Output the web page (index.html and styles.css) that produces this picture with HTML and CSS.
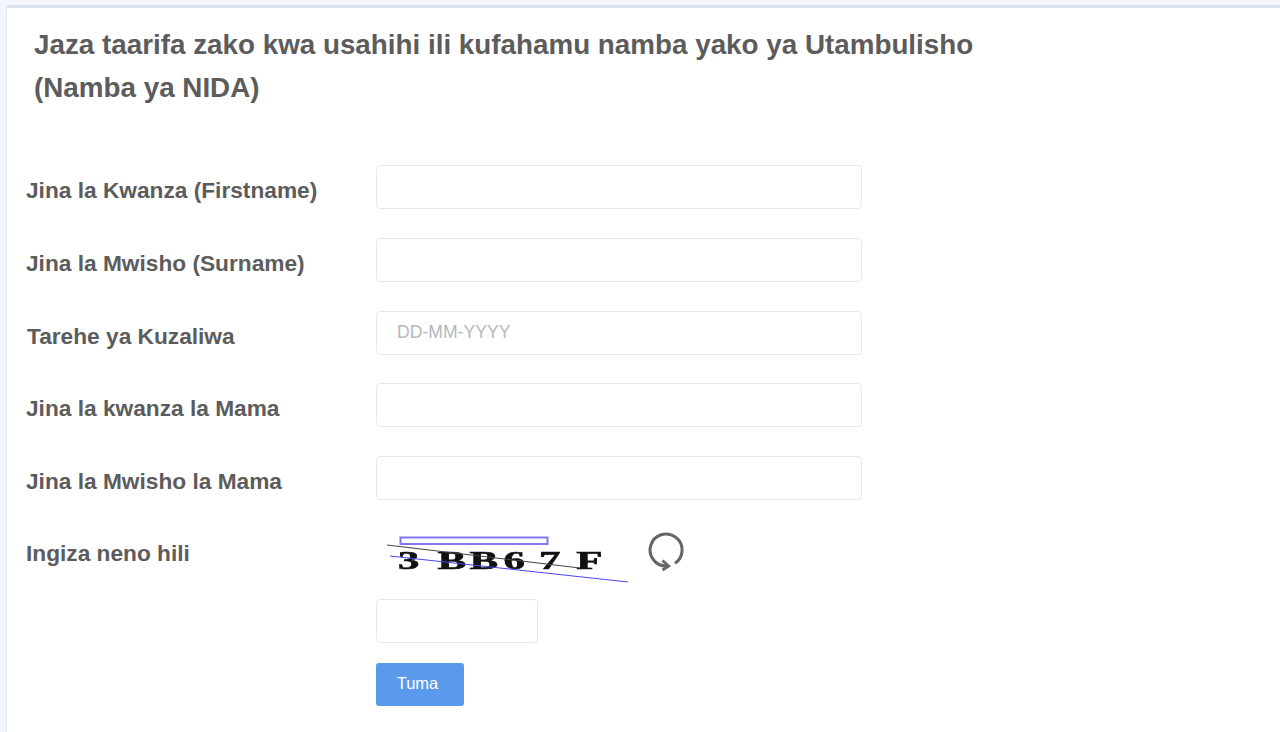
FILE: index.html
```html
<!DOCTYPE html>
<html>
<head>
    <title>Namba ya NIDA</title>
    <link rel="stylesheet" href="styles.css">
</head>
<body>
    <div class="card">
        <h1 class="title">Jaza taarifa zako kwa usahihi ili kufahamu namba yako ya Utambulisho<br>(Namba ya NIDA)</h1>

        <form class="lookup-form">
            <div class="form-row">
                <label for="firstname">Jina la Kwanza (Firstname)</label>
                <input type="text" id="firstname" />
            </div>
            <div class="form-row">
                <label for="surname">Jina la Mwisho (Surname)</label>
                <input type="text" id="surname" />
            </div>
            <div class="form-row">
                <label for="dob" class="label-dob">Tarehe ya Kuzaliwa</label>
                <input type="text" id="dob" placeholder="DD-MM-YYYY" />
            </div>
            <div class="form-row">
                <label for="mfirst">Jina la kwanza la Mama</label>
                <input type="text" id="mfirst" />
            </div>
            <div class="form-row">
                <label for="mlast">Jina la Mwisho la Mama</label>
                <input type="text" id="mlast" />
            </div>

            <div class="form-row captcha-row">
                <label for="captcha">Ingiza neno hili</label>
                <div class="captcha-box">
                    <div class="captcha-top">
                        <svg class="captcha-img" width="246" height="50" viewBox="0 0 246 50">
                            <rect x="13.5" y="2.5" width="147" height="6.5" fill="#fff" stroke="#7f78f2" stroke-width="2" />
                            <text transform="translate(11 33.5) scale(1.65 1)" x="0 24 43.4 64 85.5 108" class="captcha-text">3BB67F</text>
                            <line x1="0" y1="10" x2="193" y2="33" stroke="#444" stroke-width="1" />
                            <line x1="3" y1="21" x2="241" y2="47" stroke="#4a45ea" stroke-width="1" />
                        </svg>
                        <svg class="refresh" width="38" height="42" viewBox="0 0 38 42" fill="none" stroke="#666" stroke-width="3">
                            <path d="M28 33.3 A16 16 0 1 0 19.7 36" />
                            <path d="M15.5 30.5 L21.5 36 L15.5 40" />
                        </svg>
                    </div>
                    <input type="text" id="captcha" class="captcha-input" />
                    <button type="button" class="submit-btn">Tuma</button>
                </div>
            </div>
        </form>
    </div>
</body>
</html>
```

FILE: styles.css
```css
html, body {
    height: 100%;
}
body {
    margin: 0;
    padding: 5px 0 0 6px;
    box-sizing: border-box;
    overflow: hidden;
    background-color: #f2f5f9;
    font-family: "Liberation Sans", Arial, sans-serif;
}
.card {
    height: calc(100% + 5px);
    box-sizing: border-box;
    background-color: #fff;
    border-top: 3px solid #d9e2ea;
    border-left: 1px solid #e4e9ef;
    border-top-left-radius: 4px;
    padding: 15px 0 0 19px;
}
.title {
    margin: 0 0 56px 8px;
    font-size: 27.8px;
    line-height: 43px;
    font-weight: bold;
    color: #5c5c5c;
}
.form-row {
    display: flex;
    margin-bottom: 28.75px;
}
label {
    width: 350px;
    flex-shrink: 0;
    padding-top: 11px;
    font-size: 22.7px;
    line-height: 28px;
    font-weight: bold;
    color: #5c5c5c;
}
.label-dob {
    padding-left: 1px;
    width: 349px;
}
input {
    width: 486px;
    height: 44px;
    box-sizing: border-box;
    padding: 0 20px;
    background-color: #fff;
    border: 1px solid #e6e8eb;
    border-radius: 4px;
    font-family: "Liberation Sans", Arial, sans-serif;
    font-size: 17.6px;
    color: #5c5c5c;
}
input::placeholder {
    color: #b4b8bf;
    opacity: 1;
}
.captcha-row {
    padding-top: 6px;
}
.captcha-row label {
    padding-top: 0;
    margin-top: 4px;
}
.captcha-top {
    display: flex;
    align-items: flex-start;
    height: 50px;
    margin-bottom: 14px;
}
.captcha-img {
    margin-left: 11px;
    filter: blur(0.4px);
}
.captcha-text {
    font-family: "Liberation Serif", serif;
    font-weight: bold;
    font-size: 26px;
    fill: #111;
    stroke: #111;
    stroke-width: 0.6;
}
.refresh {
    margin-left: 14px;
    margin-top: -5px;
}
.captcha-input {
    display: block;
    width: 162px;
    margin-bottom: 20px;
}
.submit-btn {
    display: block;
    width: 88px;
    height: 43px;
    padding: 0 5px 1px 0;
    border: none;
    border-radius: 3px;
    background-color: #5a9aec;
    color: #fff;
    font-family: "Liberation Sans", Arial, sans-serif;
    font-size: 16.5px;
}
```
